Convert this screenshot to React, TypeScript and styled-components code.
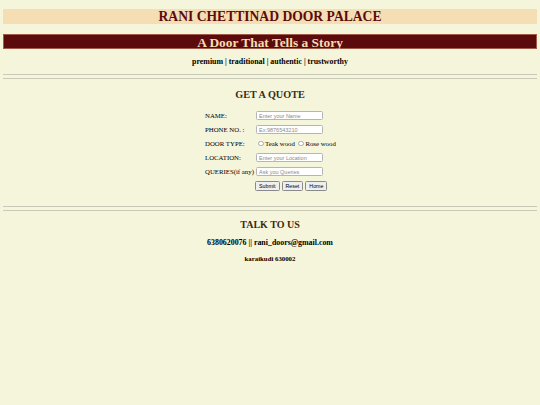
import React from "react";
import styled, { createGlobalStyle } from "styled-components";

const Global = createGlobalStyle`
  html, body { margin: 0; padding: 0; background: #f5f5dc; }
  body { font-family: "Liberation Serif", "Times New Roman", serif; color: #000; }
  * { box-sizing: border-box; }
`;

const Page = styled.div`
  padding: 9px 3px 0;
  display: flex;
  flex-direction: column;
`;

const Banner = styled.h1<{ $dark?: boolean }>`
  margin: 0;
  height: 15px;
  line-height: 15px;
  text-align: center;
  font-weight: bold;
  font-size: ${(p) => (p.$dark ? "13.4px" : "13.6px")};
  background: ${(p) => (p.$dark ? "#5c0b0d" : "#f5deb3")};
  color: ${(p) => (p.$dark ? "#f5deb3" : "#5c0b0d")};
  border: ${(p) => (p.$dark ? "1px solid #a05a4a" : "none")};
  margin-top: ${(p) => (p.$dark ? "10px" : "0")};
`;

const Tagline = styled.p`
  margin: 8px 0 0;
  text-align: center;
  font-size: 7.9px;
  font-weight: bold;
  line-height: 10px;
`;

const Rule = styled.hr<{ $top: number }>`
  margin: ${(p) => p.$top}px 0 0;
  border: none;
  border-top: 1px solid #c9c9b8;
  height: 0;
`;

const Spacer = styled.div<{ $h: number }>`
  height: ${(p) => p.$h}px;
`;

const Heading = styled.h2`
  margin: 0;
  text-align: center;
  font-size: 10.2px;
  font-weight: bold;
  color: #3b2a10;
  line-height: 13px;
`;

const Form = styled.form`
  margin: 10px auto 0;
  display: grid;
  grid-template-columns: 51px auto;
  row-gap: 5px;
  align-items: center;
  width: 130px;
`;

const Label = styled.label`
  font-size: 6.8px;
  line-height: 9px;
  white-space: nowrap;
`;

const Input = styled.input`
  width: 67px;
  height: 9px;
  padding: 0 2px;
  border: 1px solid #b5b5b5;
  border-radius: 1.5px;
  background: #fff;
  font-family: Arial, "Liberation Sans", sans-serif;
  font-size: 5.5px;
  outline: none;
  &::placeholder { color: #8a8a8a; }
`;

const Radios = styled.div`
  display: flex;
  align-items: center;
  gap: 1.5px;
  font-size: 6.8px;
  line-height: 9px;
  white-space: nowrap;
`;

const Radio = styled.span`
  display: inline-block;
  width: 5.5px;
  height: 5.5px;
  border-radius: 50%;
  border: 0.7px solid #aaa;
  background: #fff;
  margin-left: 2px;
`;

const Buttons = styled.div`
  grid-column: 2;
  display: flex;
  gap: 2px;
  margin-left: -1px;
`;

const Button = styled.button`
  height: 9.5px;
  padding: 0 3px;
  font-family: Arial, "Liberation Sans", sans-serif;
  font-size: 5.3px;
  line-height: 8px;
  background: #efefef;
  border: 1px solid #8a8a8a;
  border-radius: 1.5px;
  color: #000;
`;

const Contact = styled.p<{ $size: number; $top: number; $brown?: boolean }>`
  margin: ${(p) => p.$top}px 0 0;
  text-align: center;
  font-weight: bold;
  font-size: ${(p) => p.$size}px;
  line-height: ${(p) => p.$size + 2}px;
  color: ${(p) => (p.$brown ? "#3b2a10" : "#000")};
`;

export default function App() {
  return (
    <>
      <Global />
      <Page>
        <Banner>RANI CHETTINAD DOOR PALACE</Banner>
        <Banner $dark>A Door That Tells a Story</Banner>
        <Tagline>premium | traditional | authentic | trustworthy</Tagline>
        <Rule $top={7} />
        <Rule $top={3} />
        <Spacer $h={9} />
        <Heading>GET A QUOTE</Heading>
        <Form>
          <Label>NAME:</Label>
          <Input placeholder="Enter your Name" />
          <Label>PHONE NO. :</Label>
          <Input placeholder="Ex:9876543210" />
          <Label>DOOR TYPE:</Label>
          <Radios>
            <Radio />Teak wood <Radio />Rose wood
          </Radios>
          <Label>LOCATION:</Label>
          <Input placeholder="Enter your Location" />
          <Label>QUERIES(if any)</Label>
          <Input placeholder="Ask you Queries" />
          <Buttons>
            <Button type="button">Submit</Button>
            <Button type="button">Reset</Button>
            <Button type="button">Home</Button>
          </Buttons>
        </Form>
        <Rule $top={15} />
        <Rule $top={3} />
        <Contact $size={10} $top={8} $brown>TALK TO US</Contact>
        <Contact $size={7.9} $top={7}>6380620076 || rani_doors@gmail.com</Contact>
        <Contact $size={6.8} $top={8}>karaikudi 630002</Contact>
      </Page>
    </>
  );
}
